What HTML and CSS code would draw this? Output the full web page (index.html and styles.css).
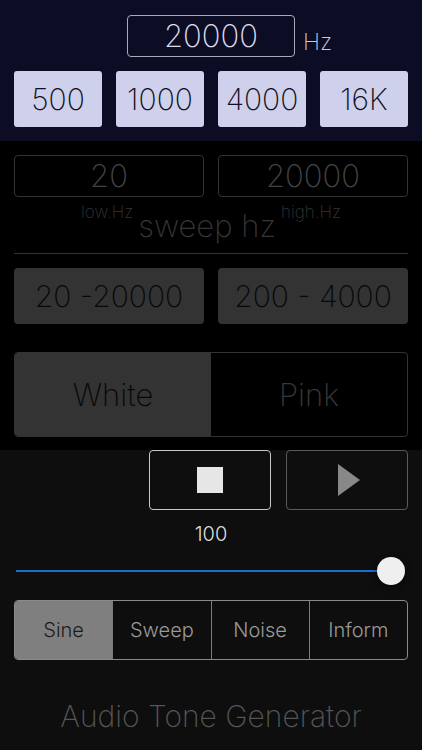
FILE: index.html
```
<!DOCTYPE html>
<html>
<head>
<meta charset="utf-8">
<link rel="stylesheet" href="styles.css">
</head>
<body>
<div class="app">
  <section class="top">
    <div class="freq-row">
      <div class="freq-box">20000</div>
      <div class="unit">Hz</div>
    </div>
    <div class="presets">
      <div class="preset">500</div>
      <div class="preset">1000</div>
      <div class="preset">4000</div>
      <div class="preset">16K</div>
    </div>
  </section>
  <section class="mid">
    <div class="range-row">
      <div class="range-box">20</div>
      <div class="range-box">20000</div>
    </div>
    <div class="labels">
      <span class="small-label">low.Hz</span>
      <span class="sweep-label">sweep hz</span>
      <span class="small-label">high.Hz</span>
    </div>
    <div class="divider"></div>
    <div class="range-row presets2">
      <div class="sweep-preset">20 -20000</div>
      <div class="sweep-preset">200 - 4000</div>
    </div>
    <div class="noise">
      <div class="noise-seg active">White</div>
      <div class="noise-seg">Pink</div>
    </div>
  </section>
  <section class="bottom">
    <div class="controls">
      <div class="ctrl stop"><span class="square"></span></div>
      <div class="ctrl play">
        <svg width="24" height="32" viewBox="0 0 24 32"><polygon points="1,0 23,16 1,32" fill="#888"/></svg>
      </div>
    </div>
    <div class="volume">100</div>
    <div class="slider">
      <div class="track"></div>
      <div class="thumb"></div>
    </div>
    <div class="tabs">
      <div class="tab selected">Sine</div>
      <div class="tab">Sweep</div>
      <div class="tab">Noise</div>
      <div class="tab">Inform</div>
    </div>
    <div class="title">Audio Tone Generator</div>
  </section>
</div>
</body>
</html>
```
FILE: styles.css
```
* { box-sizing: border-box; }
html, body { margin: 0; padding: 0; background: #0e0e0e; }
body {
  font-family: "Inter", "Liberation Sans", sans-serif;
  font-weight: 200;
}
.app { width: 422px; height: 750px; overflow: hidden; display: flex; flex-direction: column; }

.top {
  background: #0c0c25;
  height: 141px;
  padding: 15px 14px 0;
}
.freq-row {
  display: grid;
  grid-template-columns: 1fr 168px 1fr;
  align-items: end;
}
.freq-box {
  grid-column: 2;
  height: 42px;
  border: 1px solid #a9a9bd;
  border-radius: 4px;
  color: #dcdcea;
  font-size: 31px;
  line-height: 40px;
  text-align: center;
}
.unit {
  color: #c8c8d8;
  font-size: 23px;
  line-height: 26px;
  padding-left: 8px;
  margin-bottom: 2px;
}
.presets {
  display: flex;
  gap: 14px;
  margin-top: 14px;
}
.preset {
  flex: 1;
  height: 56px;
  background: #cfd0eb;
  border-radius: 3px;
  color: #101022;
  font-size: 30px;
  line-height: 56px;
  text-align: center;
}

.mid {
  background: #000;
  height: 309px;
  padding: 14px 14px 0;
}
.range-row { display: flex; gap: 14px; }
.range-box {
  flex: 1;
  height: 42px;
  border: 1px solid #333;
  border-radius: 4px;
  color: #444;
  font-size: 31px;
  line-height: 40px;
  text-align: center;
}
.labels {
  display: flex;
  justify-content: center;
  align-items: flex-start;
  gap: 5px;
  height: 57px;
  color: #353535;
}
.small-label { font-size: 17px; line-height: 20px; margin-top: 5px; }
.sweep-label { font-size: 31px; line-height: 36px; margin-top: 11px; }
.divider { height: 1px; background: #333; margin-top: -1px; }
.presets2 { margin-top: 14px; }
.sweep-preset {
  flex: 1;
  height: 56px;
  background: #333;
  border-radius: 4px;
  color: #080808;
  font-size: 30px;
  line-height: 56px;
  text-align: center;
}
.noise {
  margin-top: 28px;
  display: flex;
  height: 85px;
  border: 1px solid #333;
  border-radius: 4px;
  overflow: hidden;
}
.noise-seg {
  flex: 1;
  font-size: 31px;
  line-height: 83px;
  text-align: center;
  color: #383838;
}
.noise-seg.active { background: #333; color: #080808; }

.bottom {
  flex: 1;
  background: #0e0e0e;
  padding: 0 14px;
}
.controls {
  display: flex;
  justify-content: flex-end;
  gap: 15px;
}
.ctrl {
  width: 122px;
  height: 60px;
  border-radius: 4px;
  display: flex;
  align-items: center;
  justify-content: center;
}
.stop { border: 1px solid #c8c8c8; }
.play { border: 1px solid #5a5a5a; padding-left: 4px; }
.square { width: 26px; height: 26px; background: #e6e6e6; display: block; }
.volume {
  color: #dedede;
  font-size: 20px;
  line-height: 24px;
  text-align: center;
  margin-top: 12px;
  font-weight: 300;
}
.slider {
  position: relative;
  height: 36px;
  margin: 7px 0 0 2px;
}
.track {
  position: absolute;
  left: 0;
  right: 18px;
  top: 17px;
  height: 2px;
  background: #1a6ed2;
}
.thumb {
  position: absolute;
  right: 3px;
  top: 4px;
  width: 28px;
  height: 28px;
  border-radius: 50%;
  background: #efefef;
  box-shadow: 0 2px 6px rgba(0,0,0,0.6);
}
.tabs {
  margin-top: 11px;
  display: flex;
  height: 60px;
  border: 1px solid #8a8a8a;
  border-radius: 4px;
  overflow: hidden;
}
.tab {
  flex: 1;
  text-align: center;
  font-size: 20px;
  line-height: 58px;
  color: #9a9a9a;
  font-weight: 300;
  border-left: 1px solid #7a7a7a;
}
.tab:first-child { border-left: none; }
.tab.selected { background: #7f7f7f; color: #1c1c1c; }
.title {
  text-align: center;
  color: #555;
  font-size: 30px;
  line-height: 36px;
  margin-top: 38px;
}
```
